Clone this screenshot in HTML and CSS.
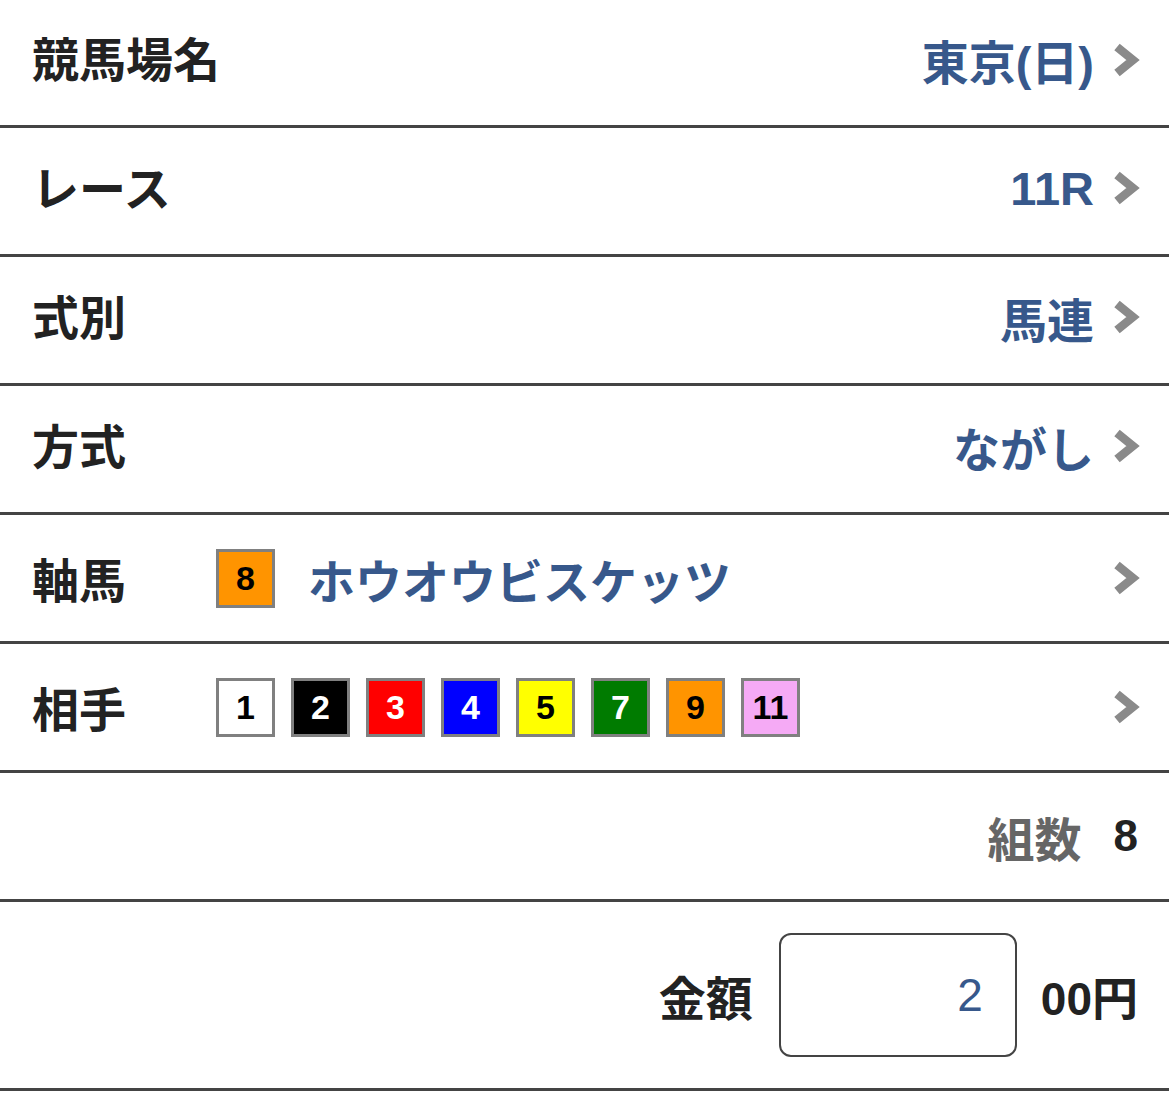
FILE: index.html
```html
<!DOCTYPE html>
<html lang="ja">
<head>
<meta charset="utf-8">
<link rel="stylesheet" href="styles.css">
</head>
<body>
<div class="list">
  <div class="row simple">
    <div class="label">競馬場名</div>
    <div class="value">東京(日)</div>
    <svg class="chev" viewBox="0 0 28 34"><polyline points="5,4 21,17 5,30"/></svg>
  </div>
  <div class="row simple">
    <div class="label">レース</div>
    <div class="value">11R</div>
    <svg class="chev" viewBox="0 0 28 34"><polyline points="5,4 21,17 5,30"/></svg>
  </div>
  <div class="row simple">
    <div class="label">式別</div>
    <div class="value">馬連</div>
    <svg class="chev" viewBox="0 0 28 34"><polyline points="5,4 21,17 5,30"/></svg>
  </div>
  <div class="row simple">
    <div class="label">方式</div>
    <div class="value">ながし</div>
    <svg class="chev" viewBox="0 0 28 34"><polyline points="5,4 21,17 5,30"/></svg>
  </div>
  <div class="row">
    <div class="label fixed">軸馬</div>
    <div class="horses">
      <span class="num c-orange">8</span>
      <span class="hname">ホウオウビスケッツ</span>
    </div>
    <svg class="chev" viewBox="0 0 28 34"><polyline points="5,4 21,17 5,30"/></svg>
  </div>
  <div class="row">
    <div class="label fixed">相手</div>
    <div class="horses nums">
      <span class="num c-white">1</span>
      <span class="num c-black">2</span>
      <span class="num c-red">3</span>
      <span class="num c-blue">4</span>
      <span class="num c-yellow">5</span>
      <span class="num c-green">7</span>
      <span class="num c-orange">9</span>
      <span class="num c-pink">11</span>
    </div>
    <svg class="chev" viewBox="0 0 28 34"><polyline points="5,4 21,17 5,30"/></svg>
  </div>
  <div class="row end">
    <span class="count-label">組数</span>
    <span class="count">8</span>
  </div>
  <div class="row end tall">
    <span class="amount-label">金額</span>
    <div class="input">2</div>
    <span class="unit">00円</span>
  </div>
</div>
</body>
</html>
```

FILE: styles.css
```css
html, body {
  margin: 0;
  padding: 0;
  background: #fff;
}
body {
  font-family: "Liberation Sans", "Noto Sans CJK JP", sans-serif;
  color: #222;
}
.list {
  display: flex;
  flex-direction: column;
}
.row {
  height: 126px;
  border-bottom: 3px solid #444;
  display: flex;
  align-items: center;
  padding: 0 29px 0 32px;
  box-sizing: content-box;
}
.row:first-child {
  height: 125px;
}
.row.simple {
  height: 120px;
  padding-bottom: 6px;
}
.row.simple:first-child {
  height: 119px;
}
.row.tall {
  height: 186px;
}
.label {
  font-size: 47px;
  font-weight: bold;
  color: #222;
  flex: 1;
  margin-bottom: 6px;
}
.label.fixed {
  flex: 0 0 184px;
  margin-bottom: 2px;
}
.value {
  font-size: 47px;
  font-weight: bold;
  color: #37588b;
  margin-right: 18px;
}
.chev {
  width: 28px;
  height: 34px;
  flex: 0 0 28px;
}
.chev polyline {
  fill: none;
  stroke: #8a8a8a;
  stroke-width: 8.5;
}
.horses {
  flex: 1;
  display: flex;
  align-items: center;
}
.horses.nums {
  gap: 16px;
}
.num {
  width: 53px;
  height: 53px;
  border: 3px solid #808080;
  display: flex;
  align-items: center;
  justify-content: center;
  font-size: 34px;
  font-weight: bold;
  color: #000;
}
.hname {
  margin-left: 33px;
  font-size: 47px;
  font-weight: bold;
  color: #37588b;
}
.c-white { background: #fff; color: #000; }
.c-black { background: #000; color: #fff; }
.c-red { background: #ff0000; color: #fff; }
.c-blue { background: #0000ff; color: #fff; }
.c-yellow { background: #ffff00; color: #000; }
.c-green { background: #007b00; color: #fff; }
.c-orange { background: #ff9400; color: #000; }
.c-pink { background: #f5aaf5; color: #000; }
.row.end {
  justify-content: flex-end;
  padding-right: 31px;
}
.count-label {
  font-size: 47px;
  font-weight: bold;
  color: #666;
}
.count {
  font-size: 44px;
  font-weight: bold;
  color: #222;
  margin-left: 32px;
}
.amount-label {
  font-size: 47px;
  font-weight: bold;
  color: #222;
}
.input {
  width: 238px;
  height: 124px;
  border: 2.5px solid #444;
  border-radius: 12px;
  margin-left: 26px;
  margin-right: 24px;
  display: flex;
  align-items: center;
  justify-content: flex-end;
  padding-right: 32px;
  box-sizing: border-box;
  font-family: "Liberation Sans", sans-serif;
  font-size: 46px;
  font-weight: normal;
  color: #37588b;
}
.unit {
  font-size: 46px;
  font-weight: bold;
  color: #222;
}
```
